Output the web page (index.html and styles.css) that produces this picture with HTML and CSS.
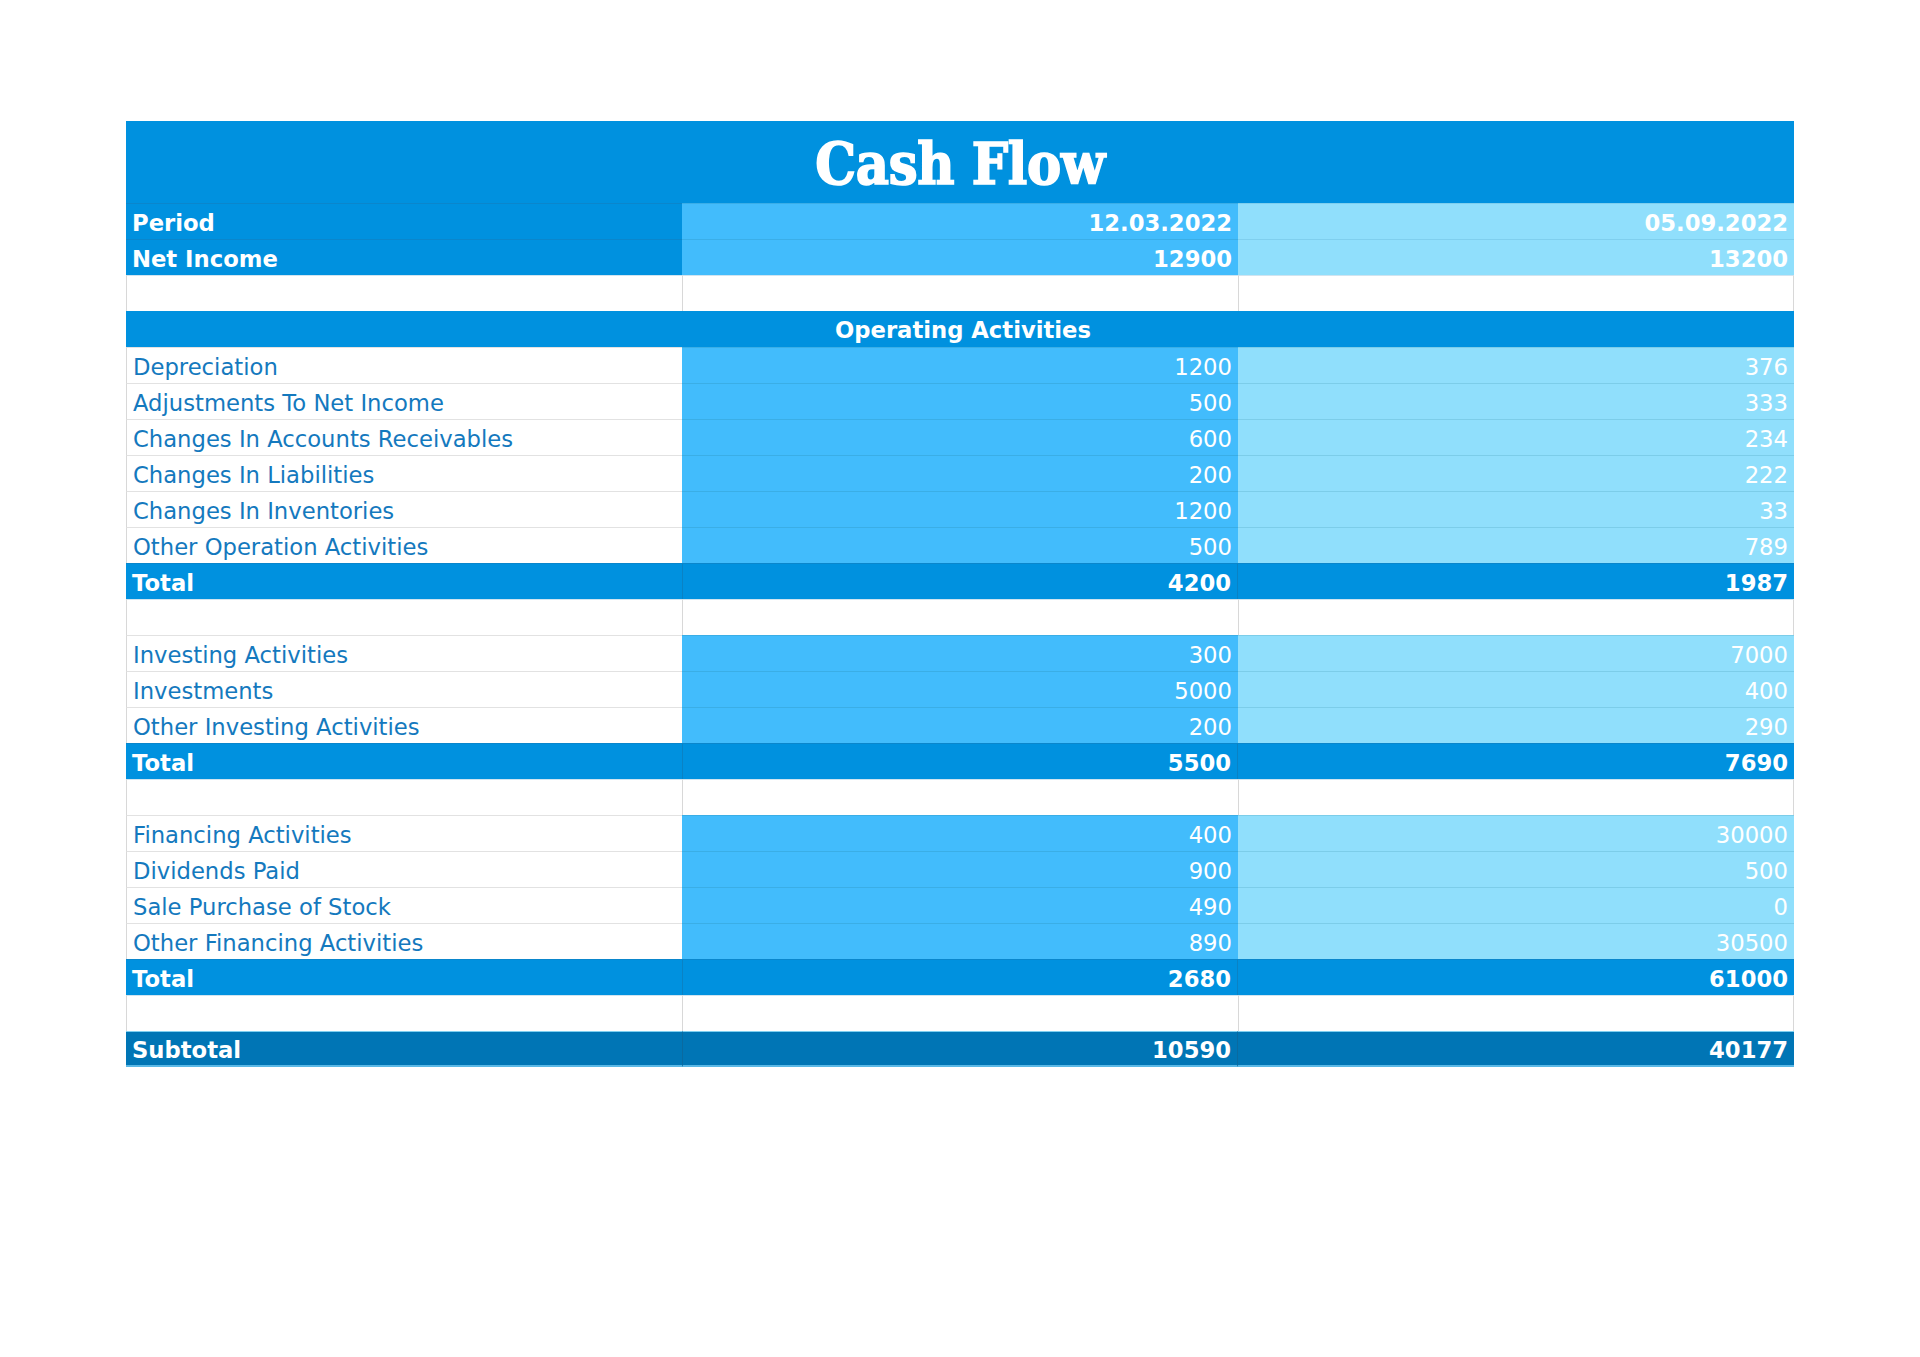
FILE: index.html
```html
<!DOCTYPE html>
<html>
<head>
<meta charset="utf-8">
<link rel="stylesheet" href="styles.css">
</head>
<body>
<div class="sheet">
  <div class="title">Cash Flow</div>
  <div class="row head"><div class="c1">Period</div><div class="c2">12.03.2022</div><div class="c3">05.09.2022</div></div>
  <div class="row head"><div class="c1">Net Income</div><div class="c2">12900</div><div class="c3">13200</div></div>
  <div class="row blank"><div class="c1"></div><div class="c2"></div><div class="c3"></div></div>
  <div class="section">Operating Activities</div>
  <div class="row item"><div class="c1">Depreciation</div><div class="c2">1200</div><div class="c3">376</div></div>
  <div class="row item"><div class="c1">Adjustments To Net Income</div><div class="c2">500</div><div class="c3">333</div></div>
  <div class="row item"><div class="c1">Changes In Accounts Receivables</div><div class="c2">600</div><div class="c3">234</div></div>
  <div class="row item"><div class="c1">Changes In Liabilities</div><div class="c2">200</div><div class="c3">222</div></div>
  <div class="row item"><div class="c1">Changes In Inventories</div><div class="c2">1200</div><div class="c3">33</div></div>
  <div class="row item"><div class="c1">Other Operation Activities</div><div class="c2">500</div><div class="c3">789</div></div>
  <div class="row total"><div class="c1">Total</div><div class="c2">4200</div><div class="c3">1987</div></div>
  <div class="row blank"><div class="c1"></div><div class="c2"></div><div class="c3"></div></div>
  <div class="row item"><div class="c1">Investing Activities</div><div class="c2">300</div><div class="c3">7000</div></div>
  <div class="row item"><div class="c1">Investments</div><div class="c2">5000</div><div class="c3">400</div></div>
  <div class="row item"><div class="c1">Other Investing Activities</div><div class="c2">200</div><div class="c3">290</div></div>
  <div class="row total"><div class="c1">Total</div><div class="c2">5500</div><div class="c3">7690</div></div>
  <div class="row blank"><div class="c1"></div><div class="c2"></div><div class="c3"></div></div>
  <div class="row item"><div class="c1">Financing Activities</div><div class="c2">400</div><div class="c3">30000</div></div>
  <div class="row item"><div class="c1">Dividends Paid</div><div class="c2">900</div><div class="c3">500</div></div>
  <div class="row item"><div class="c1">Sale Purchase of Stock</div><div class="c2">490</div><div class="c3">0</div></div>
  <div class="row item"><div class="c1">Other Financing Activities</div><div class="c2">890</div><div class="c3">30500</div></div>
  <div class="row total"><div class="c1">Total</div><div class="c2">2680</div><div class="c3">61000</div></div>
  <div class="row blank"><div class="c1"></div><div class="c2"></div><div class="c3"></div></div>
  <div class="row subtotal"><div class="c1">Subtotal</div><div class="c2">10590</div><div class="c3">40177</div></div>
</div>
</body>
</html>
```

FILE: styles.css
```css
html, body {
  margin: 0;
  padding: 0;
  background: #ffffff;
}
body {
  font-family: "DejaVu Sans", "Liberation Sans", sans-serif;
  font-size: 22.7px;
  padding: 121px 0 0 126px;
}
.sheet {
  width: 1668px;
  display: flex;
  flex-direction: column;
}
.title {
  height: 82px;
  background: #0091df;
  color: #ffffff;
  font-family: "DejaVu Serif Condensed", "DejaVu Serif", "Liberation Serif", serif;
  font-weight: bold;
  font-size: 57px;
  -webkit-text-stroke: 1.6px #ffffff;
  letter-spacing: -0.3px;
  display: flex;
  align-items: center;
  justify-content: center;
  box-sizing: border-box;
  padding-top: 2px;
}
.row {
  display: grid;
  grid-template-columns: 556px 556px 556px;
  height: 36px;
}
.row > div {
  box-sizing: border-box;
  display: flex;
  align-items: center;
  padding: 2px 6px 0 6px;
  white-space: nowrap;
}
.row .c2, .row .c3 {
  justify-content: flex-end;
  color: #ffffff;
}
.head > div {
  font-weight: bold;
  color: #ffffff;
  border-top: 1px solid #0a86cc;
}
.head .c1 { background: #0091df; }
.head .c2 { background: #42bcfc; border-top-color: #3aaee8; }
.head .c3 { background: #90dffc; border-top-color: #7fcfee; }
.blank > div {
  background: #ffffff;
  border-left: 1px solid #d8d8d8;
  border-top: 1px solid #d0e4f0;
}
.blank .c3 { border-right: 1px solid #d8d8d8; }
.section {
  height: 36px;
  box-sizing: border-box;
  background: #0091df;
  color: #ffffff;
  font-weight: bold;
  display: flex;
  align-items: center;
  justify-content: center;
  padding: 2px 0 0 6px;
}
.item > div { border-top: 1px solid #e2e2e2; }
.item .c1 {
  background: #ffffff;
  color: #1479be;
  border-left: 1px solid #d8d8d8;
}
.item .c2 { background: #42bcfc; border-top-color: #3aaee6; }
.item .c3 { background: #90dffc; border-top-color: #7ccde9; }
.total > div {
  background: #0091df;
  color: #ffffff;
  font-weight: bold;
  border-top: 1px solid #0a86cc;
}
.total .c2 { border-left: 1px solid #0a82c4; border-right: 1px solid #0a82c4; }
.subtotal > div {
  background: #0075b5;
  color: #ffffff;
  font-weight: bold;
  border-top: 1px solid #7fcff0;
  border-bottom: 2px solid #5ab8e6;
}
.subtotal .c2 { border-left: 1px solid #0a6aa0; border-right: 1px solid #0a6aa0; }
```
